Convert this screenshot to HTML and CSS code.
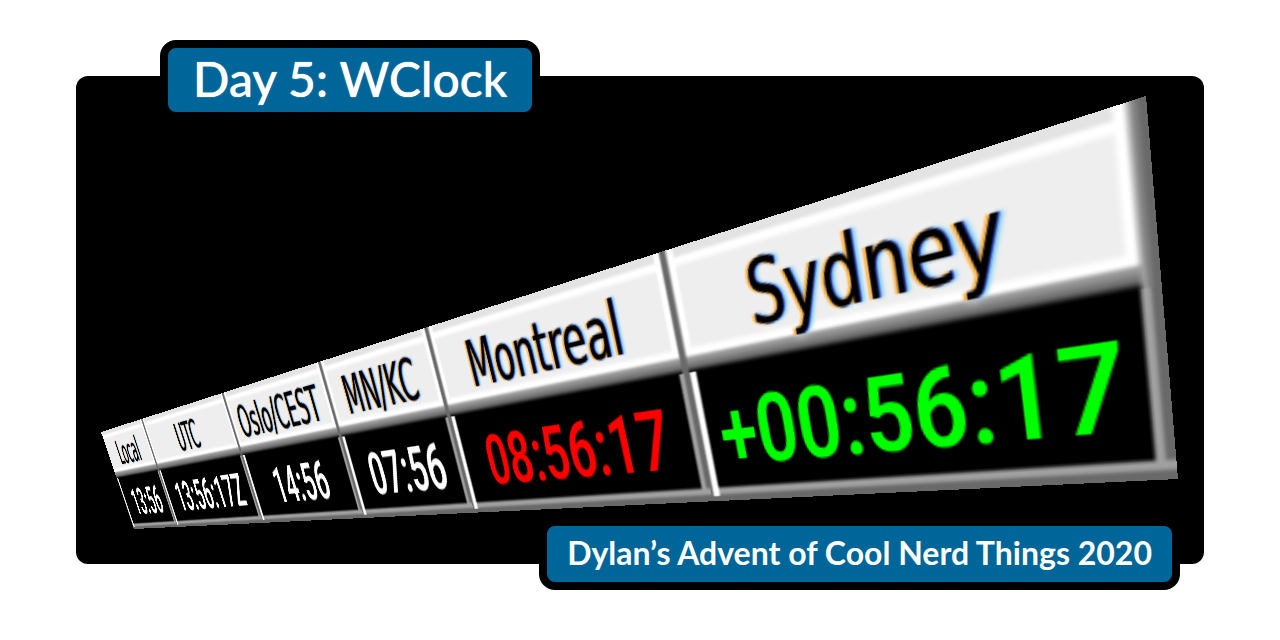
FILE: index.html
```html
<!DOCTYPE html>
<html lang="en">
<head>
<meta charset="utf-8">
<title>Day 5: WClock</title>
<link rel="stylesheet" href="styles.css">
</head>
<body>
<main class="card">
  <h1 class="badge badge-title">Day 5: WClock</h1>
  <div class="scene">
    <div class="clock">
      <section class="zone"><h2 class="place">Local</h2><time class="time">13:56</time></section>
      <section class="zone"><h2 class="place">UTC</h2><time class="time">13:56:17Z</time></section>
      <section class="zone"><h2 class="place">Oslo/CEST</h2><time class="time">14:56</time></section>
      <section class="zone"><h2 class="place">MN/KC</h2><time class="time">07:56</time></section>
      <section class="zone"><h2 class="place">Montreal</h2><time class="time time-red">08:56:17</time></section>
      <section class="zone"><h2 class="place">Sydney</h2><time class="time time-green">+00:56:17</time></section>
    </div>
  </div>
  <p class="badge badge-series">Dylan’s Advent of Cool Nerd Things 2020</p>
</main>
</body>
</html>
```
FILE: styles.css
```css
* {
  box-sizing: border-box;
}

body {
  margin: 0;
  padding: 76px;
  background: #fff;
  font-family: Lato, sans-serif;
}

.card {
  position: relative;
  display: flex;
  justify-content: center;
  min-height: 488px;
  border-radius: 12px;
  background: #000;
}

.badge {
  position: absolute;
  margin: 0;
  border: 8px solid #000;
  border-radius: 16px;
  background: #069;
  color: #fff;
  white-space: nowrap;
}

.badge-title {
  top: -36px;
  left: 84px;
  padding: 0 25px 2px;
  font-size: 48px;
  font-weight: 500;
  line-height: 62px;
  text-shadow: 0 0 1px #fff;
}

.badge-series {
  right: 24px;
  bottom: -26px;
  padding: 0 20px 2px;
  font-size: 32px;
  font-weight: 700;
  line-height: 54px;
}

.scene {
  flex: 0 0 1128px;
  min-width: 0;
}

/* The strip is laid out flat, then seen in perspective as a whole. */
.clock {
  display: grid;
  grid-template-columns: 201fr 297fr 246fr 191fr 265fr 264fr;
  width: 1464px;
  transform-origin: 0 0;
  transform: matrix3d(0.170294, -0.239666, 0, -0.00050795, 0.238736, 0.748326, 0, 0.00016494, 0, 0, 1, 0, 25, 356, 0, 1);
}

.zone {
  display: flex;
  flex-direction: column;
  min-width: 0;
  text-align: center;
  white-space: nowrap;
}

.place {
  height: 68px;
  margin: 0;
  padding: 4px 6px 0 0;
  background:
    linear-gradient(to left, #696969 3px, transparent 5px),
    linear-gradient(to right, #696969, transparent 3px),
    linear-gradient(to bottom, transparent 53px, #fff 56px, #fff 58px, #a0a0a0 60px, #808080 63px, #696969 65px, #000 68px),
    linear-gradient(to left, #fff 8px, transparent 10px),
    linear-gradient(to right, #fff 6px, transparent 8px),
    linear-gradient(to bottom, #e3e3e3 4px, #fff 6px, #fff 8px, #eee 11px);
  color: #000;
  font-family: "DejaVu Sans Condensed", "DejaVu Sans", sans-serif;
  font-size: 44px;
  font-stretch: condensed;
  font-weight: 400;
  line-height: 62px;
  text-shadow: -2px 0 1px #f90a, 1px 0 1px #009c, 3px 0 2px #3bf8, 0 0 5px #fff;
}

.zone:first-child .place {
  background:
    linear-gradient(to left, #696969 3px, transparent 5px),
    linear-gradient(to bottom, transparent 53px, #fff 56px, #fff 58px, #a0a0a0 60px, #808080 63px, #696969 65px, #000 68px),
    linear-gradient(to left, #fff 8px, transparent 10px),
    linear-gradient(to bottom, #e3e3e3 4px, #fff 6px, #fff 8px, #eee 11px);
}

.zone:last-child .place {
  background:
    linear-gradient(to left, #696969 2px, #888 5px, #a0a0a0 6px, transparent 9px),
    linear-gradient(to right, #696969, transparent 3px),
    linear-gradient(to bottom, transparent 53px, #fff 56px, #fff 58px, #a0a0a0 60px, #808080 63px, #696969 65px, #000 68px),
    linear-gradient(to left, #fff 11px, transparent 14px),
    linear-gradient(to right, #fff 6px, transparent 8px),
    linear-gradient(to bottom, #e3e3e3 4px, #fff 6px, #fff 8px, #eee 11px);
}

.time {
  height: 76px;
  padding: 6px 0 0 10px;
  background:
    linear-gradient(to right, #696969 1px, #fff 3px, #fff 6px, transparent 8px) 0 0 / 100% 73px no-repeat,
    linear-gradient(to top, #696969 3px, #a0a0a0 5px, #a0a0a0 7px, transparent 9px),
    linear-gradient(to left, #696969 2px, #a0a0a0 4px, #a0a0a0 6px, transparent 8px),
    #000;
  color: #fff;
  font-family: Roboto, sans-serif;
  font-size: 51px;
  font-weight: 600;
  line-height: 64px;
}

.zone:last-child .time {
  padding-left: 0;
  background:
    linear-gradient(to right, #696969 1px, #fff 3px, #fff 6px, transparent 8px) 0 0 / 100% 73px no-repeat,
    linear-gradient(to top, #696969 3px, #a0a0a0 5px, #a0a0a0 7px, transparent 9px),
    linear-gradient(to left, #696969 3px, #a0a0a0 5px, #a0a0a0 7px, transparent 9px),
    #000;
}

.time-red {
  color: #f00;
}

.time-green {
  color: #0f0;
}
```
